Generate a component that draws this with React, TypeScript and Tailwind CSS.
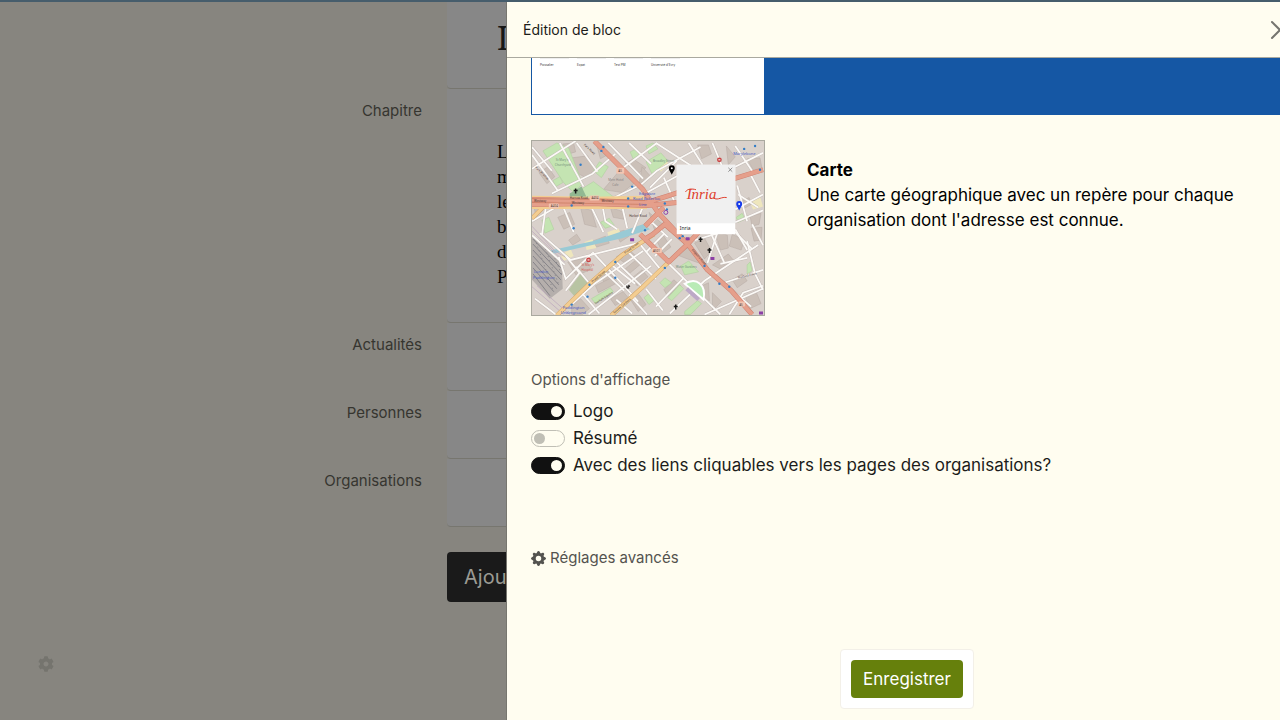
import { FaCog } from 'react-icons/fa'
import { BsGearFill } from 'react-icons/bs'
import { X } from 'lucide-react'

const blocks = [
  { label: 'Actualités' },
  { label: 'Personnes' },
  { label: 'Organisations' },
]

const options = [
  { id: 'logo', label: 'Logo', checked: true },
  { id: 'summary', label: 'Résumé', checked: false },
  { id: 'links', label: 'Avec des liens cliquables vers les pages des organisations?', checked: true },
]

const parks = [
  'M11 10 25 2 37 7 51 43 42 52 32 42Z',
  'M49 49 62 41 83 57 62 65Z',
  'M62 30 68 21 77 26 70 37Z',
  'M21 40 28 36 31 42 24 46Z',
  'M99 11 105 8 108 14 102 18Z',
  'M115 21 130 12 137 20 121 33Z',
  'M115 5 122 2 127 8 118 13Z',
  'M69 82 78 78 83 85 74 88Z',
  'M10 80 17 77 22 89 13 93Z',
  'M206 77 212 73 215 79 208 82Z',
  'M150 126 158 121 168 132 154 135Z',
  'M137 158 149 145 153 149 141 161Z',
  'M154 172 167 161 171 164 160 175 154 175Z',
  'M113 158 119 153 123 161 118 165Z',
  'M129 143 134 138 141 143 134 148Z',
  'M60 159 79 148 82 152 64 164Z',
  'M217 125 220 122 222 131 217 134Z',
]

const streets = [
  'M0 28 44 0', 'M0 14 26 50', 'M0 6 20 30', 'M28 2 52 46', 'M45 2 66 31', 'M20 53 61 33 84 13',
  'M83 57 110 44 126 30 170 6', 'M92 27 126 2', 'M77 2 112 38', 'M98 2 120 23', 'M125 2 170 31',
  'M158 2 172 24', 'M182 2 194 31', 'M205 5 224 33', 'M233 12 205 26', 'M30 63 42 92', 'M60 67 72 92',
  'M0 81 27 65', 'M14 66 10 95', 'M71 65 74 81 86 89', 'M91 66 96 88', 'M112 66 101 93',
  'M0 95 33 125', 'M8 93 39 120 119 100', 'M27 117 34 139 61 113', 'M44 127 59 145', 'M61 112 90 143 107 162',
  'M84 121 113 149', 'M96 111 125 139', 'M108 103 130 130', 'M50 153 68 174', 'M72 131 93 151',
  'M79 124 104 144', 'M41 164 63 144 112 111', 'M57 175 120 126', 'M85 160 101 174', 'M98 155 116 175',
  'M115 149 132 171', 'M137 123 190 175', 'M125 167 153 138', 'M139 174 174 141 228 105', 'M184 135 221 167',
  'M174 175 233 149', 'M191 144 233 130', 'M199 175 213 153 233 146', 'M217 101 225 134 233 150',
  'M164 100 202 89 222 109', 'M179 90 194 123', 'M205 89 217 110', 'M190 83 177 123', 'M222 84 233 105',
  'M207 45 217 81', 'M205 69 233 54', 'M208 54 228 67', 'M205 82 233 70', 'M121 82 137 97', 'M115 112 133 94',
  'M124 116 141 99', 'M119 84 135 68', 'M114 53 147 35', 'M133 37 144 62', 'M190 124 217 118', 'M220 33 230 52',
  'M34 116 48 133 34 151', 'M3 159 24 175', 'M119 47 146 20',
]

const buildings = [
  'M7 32 16 26 23 36 15 43Z', 'M31 3 42 2 44 11 37 13Z', 'M40 17 56 15 64 29 54 37 47 33Z',
  'M65 3 76 14 69 18Z', 'M72 49 89 29 104 42 91 52Z', 'M94 23 108 32 115 27 102 18Z', 'M2 66 11 70 4 77Z',
  'M26 77 38 72 43 84 32 89Z', 'M49 67 60 70 65 87 53 84Z', 'M79 67 91 71 93 79 82 77Z',
  'M111 26 120 36 108 43Z', 'M167 4 178 4 181 13 171 18Z', 'M196 5 205 16 198 24Z', 'M217 18 230 17 232 28 223 29Z',
  'M211 61 219 57 221 64 214 68Z', 'M220 76 231 73 229 84 222 86Z', 'M37 100 45 94 49 100 41 105Z',
  'M61 101 74 96 78 103 65 107Z', 'M84 92 93 90 98 96 89 102Z', 'M36 122 53 118 60 129 45 136Z',
  'M68 135 77 127 84 135 73 143Z', 'M85 117 95 124 105 116 97 109Z', 'M64 146 82 137 86 143 67 153Z',
  'M101 138 111 130 117 137 106 146Z', 'M94 129 106 119 111 123 98 134Z', 'M79 159 92 152 97 158 84 166Z',
  'M40 166 49 159 58 169 51 175 40 175Z', 'M100 161 108 155 115 165 107 172Z', 'M144 114 157 108 171 124 157 119Z',
  'M161 151 178 143 179 161 169 158Z', 'M202 140 212 134 217 141 207 148Z', 'M215 157 226 152 231 164 220 169Z',
  'M182 125 198 114 203 120 190 129Z', 'M202 94 214 100 211 110 199 106Z', 'M164 103 174 98 181 111 174 119Z',
  'M184 91 197 95 198 108 190 110Z', 'M221 88 232 87 231 100 224 101Z', 'M118 72 132 84 124 91Z',
  'M126 101 133 96 140 107 132 113Z', 'M182 153 191 162 182 171Z', 'M133 150 143 140 150 146 137 157Z',
]

const roads = [
  'M0 59 55 60 116 62 138 55 147 52M204 38 233 29',
  'M0 64 60 63 116 65 146 62',
  'M63 0 90 27 112 49 127 72 157 104 177 130 201 151 222 175',
  'M114 86 133 67M112 100 122 94 134 84 157 104 138 122 109 94',
  'M157 104 168 92',
]

const stations: [number, number][] = [
  [72, 6], [70, 10], [49, 24], [101, 46], [97, 58], [97, 66], [40, 65], [42, 88], [114, 90], [84, 122],
  [84, 138], [56, 157], [58, 145], [40, 165], [134, 128], [174, 126], [189, 144], [199, 147], [214, 8],
  [225, 5], [230, 29], [136, 69], [134, 63], [149, 98], [152, 96],
]

function MapPreview() {
  return (
    <svg viewBox="0 0 234 176" className="block h-auto w-full" role="img" aria-label="Carte">
      <rect width="234" height="176" fill="#d9d1cb" />
      <g fill="#cbc0b8" stroke="#b5aaa4" strokeWidth=".5">
        {buildings.map((d) => <path key={d} d={d} />)}
      </g>
      <path d="M29 115 39 109 42 116 32 121ZM53 102 61 99 65 108 55 110ZM76 92 87 88 90 94 78 99ZM219 60 230 56 233 66 223 69ZM124 21 134 16 138 24 130 31Z" fill="#eee6bd" />
      <g fill="#c4e4b2" stroke="#afd09f" strokeWidth=".6">
        {parks.map((d) => <path key={d} d={d} />)}
      </g>
      <path d="M38 53 50 46 57 61 38 61Z" fill="#91b891" />
      <path d="M37 150 49 134 60 145 45 159Z" fill="#b8c4a3" />
      <path d="M0 112 16 111 61 101 112 84 119 89 91 98 25 113 0 117Z" fill="#99cad5" />
      <path d="M0 96 30 122 31 149 18 159 0 140Z" fill="#b5afac" />
      <g stroke="#858388">
        <path d="M1 99 31 130M1 104 30 135M1 110 29 140M1 116 27 145M1 122 25 149M1 128 22 152M1 134 18 156M7 100 31 123" />
        <path d="M3 99 21 150M12 105 27 145M20 111 30 135" strokeDasharray="1 3" />
      </g>
      <path d="M0 86 23 111 37 119M0 91 33 122M0 147 32 175M5 146 38 175" fill="none" stroke="#b9a5bc" strokeWidth=".7" />
      <g fill="none" stroke="#c1b8b4" strokeWidth="2.6">
        {streets.map((d) => <path key={d} d={d} />)}
      </g>
      <g fill="none" stroke="#fcfaf7" strokeWidth="1.8">
        {streets.map((d) => <path key={d} d={d} />)}
      </g>
      <path d="M154 144C166 137 176 145 173 160Z" fill="#b9ebb6" stroke="#fff" strokeWidth="2" />
      <path d="M156 149 168 160" stroke="#bda9c7" strokeWidth="4" />
      <path d="M25 176 59 143 91 115 123 94M80 176 112 147 139 121M0 78 12 66" fill="none" stroke="#d4a568" strokeWidth="4.4" />
      <path d="M25 176 59 143 91 115 123 94M80 176 112 147 139 121M0 78 12 66M0 57 60 58 114 57M0 67 60 67 116 67" fill="none" stroke="#f3cd91" strokeWidth="3.4" />
      <g fill="none" stroke="#cf8170" strokeWidth="5" strokeLinejoin="round">
        {roads.map((d) => <path key={d} d={d} />)}
      </g>
      <g fill="none" stroke="#e59f8b" strokeWidth="4" strokeLinejoin="round">
        {roads.map((d) => <path key={d} d={d} />)}
      </g>
      <path d="M0 62 115 64M0 58 114 60" stroke="#c8795e" strokeWidth=".7" />
      <g fill="#f2c5b1">
        <rect x="85" y="27" width="8" height="6" rx="1" />
        <rect x="58" y="55" width="10" height="5" rx="1" />
        <rect x="17" y="63" width="10" height="5" rx="1" />
        <rect x="121" y="108" width="10" height="5" rx="1" />
        <rect x="208" y="162" width="7" height="5" rx="1" />
      </g>
      <g fontFamily="Noto Sans, sans-serif" fontSize="3" fill="#4d3936">
        <text x="2" y="62">Westway</text>
        <text x="38" y="58">Harrow Road</text>
        <text x="40" y="64">Westway</text>
        <text x="70" y="62">Westway</text>
        <text x="60" y="59">A404</text>
        <text x="19" y="67">A404</text>
        <text x="87" y="31">A5</text>
        <text x="122" y="112">A501</text>
        <text x="209" y="166">A5</text>
        <text x="61" y="143" transform="rotate(-40 61 143)">Praed Street</text>
        <text x="94" y="114" transform="rotate(-37 94 114)">Praed Street</text>
        <text x="83" y="174" transform="rotate(-40 83 174)">Sussex Gardens</text>
        <text x="161" y="110" transform="rotate(49 161 110)">Edgware Road</text>
        <text x="98" y="77">Harbet Road</text>
        <text x="64" y="165" transform="rotate(-33 64 165)">Norfolk Square</text>
        <text x="52" y="4" transform="rotate(43 52 4)">Park Road</text>
        <text x="3" y="27" transform="rotate(44 3 27)">Park Pl Villas</text>
        <text x="208" y="139" transform="rotate(-14 208 139)">Nutford Place</text>
      </g>
      <g fontFamily="Noto Sans, sans-serif" fontSize="3" fill="#75907b">
        <text x="24" y="20">St Mary's</text>
        <text x="23" y="25">Churchyard</text>
        <text x="77" y="40" fill="#868181">Merc Hotel</text>
        <text x="81" y="45" fill="#868181">Cafe</text>
        <text x="145" y="128">Water Gardens</text>
        <text x="122" y="21">Broadley Street</text>
      </g>
      <g fontFamily="Noto Sans, sans-serif" fontSize="4" fill="#4457c4">
        <text x="108" y="54">Edgware</text>
        <text x="102" y="60">Road Bakerloo</text>
        <text x="108" y="66">Line</text>
        <text x="31" y="169">Paddington</text>
        <text x="29" y="175">Underground</text>
        <text x="2" y="133">London</text>
        <text x="1" y="139">Paddington</text>
        <text x="203" y="14">Marylebone</text>
      </g>
      <g fontFamily="Noto Sans, sans-serif" fontSize="3" fill="#d45b55">
        <text x="50" y="126">St Mary's</text>
        <text x="50" y="131">Hospital</text>
      </g>
      {stations.map(([x, y]) => <circle key={`${x}-${y}`} cx={x} cy={y} r="1.2" fill="#337dc6" />)}
      <path d="M99 98h4v3h-4ZM155 97h4v3h-4ZM180 117h4v3h-4ZM229 172h4v3h-4Z" fill="#8c3fa5" />
      <circle cx="135" cy="72" r="2" fill="none" stroke="#8c3fa5" />
      <circle cx="57" cy="120" r="2.4" fill="#c94242" />
      <circle cx="189" cy="19" r="2.4" fill="#c94242" />
      <path d="M56 120h2M188 19h2" stroke="#fff" />
      <path d="M44 48v5M42 50h4M170 97v5M168 99h4M179 108v5M177 110h4M145 165v5M143 167h4" stroke="#171717" strokeWidth="1.5" />
      <circle cx="97" cy="147" r="2" fill="#302d2b" />
      <path d="M96 146h1M98 148h1" stroke="#fff" />
      <path d="M141 34C139 30 138 29 138 27.500A3 3 0 0 1 144 27.500C144 29 143 30 141 34Z" fill="#000" />
      <circle cx="141" cy="27.500" r="1" fill="#fff" />
      <path d="M209 70C207 66 206 65 206 63.500A3 3 0 0 1 212 63.500C212 65 211 66 209 70Z" fill="#173bea" />
      <circle cx="209" cy="63.500" r="1" fill="#fff" />
      <rect x="146" y="24" width="59" height="70" fill="#fff" />
      <rect x="146" y="24" width="59" height="59" fill="#f0f0f0" />
      <path d="m198 27 4 4m0-4-4 4" stroke="#555" strokeWidth=".6" />
      <text x="156" y="59" fontFamily="Liberation Serif, serif" fontStyle="italic" fontSize="15" fill="#df3d2b">Inria</text>
      <path d="M155 51C157 48 161 48 165 49M184 58C188 60 191 56 196 57" fill="none" stroke="#df3d2b" strokeLinecap="round" />
      <text x="149" y="90" fontFamily="Noto Sans, sans-serif" fontSize="5" fill="#222">Inria</text>
    </svg>
  )
}

function PageBehind() {
  return (
    <main className="grid grid-cols-[422px_1fr] gap-x-[25px] text-[15px] text-[#363530]">
      <div />
      <section className="h-[87px] rounded-b border-b border-[#77766f] bg-[#878787] pt-4 pl-[50px]">
        <h2 className="font-['Noto_Serif','Liberation_Serif',serif] text-[32px] leading-10 text-[#171717]">L</h2>
      </section>
      <h3 className="pt-3 text-right leading-5">Chapitre</h3>
      <section className="h-[234px] rounded-b border-b border-[#77766f] bg-[#878787] pt-[50px] pl-[50px] font-['Liberation_Serif',serif] text-[19px] leading-[25px] text-black">
        <p>L’institut</p>
        <p>mène</p>
        <p>les</p>
        <p>besoins</p>
        <p>de</p>
        <p>Paris</p>
      </section>
      {blocks.map((block) => (
        <div key={block.label} className="contents">
          <h3 className="pt-3 text-right leading-5">{block.label}</h3>
          <section className="h-[68px] rounded-b border-b border-[#77766f] bg-[#878787]" />
        </div>
      ))}
      <div />
      <button className="mt-[25px] h-[50px] w-[220px] rounded bg-[#1a1a1a] px-[17px] text-left text-xl text-[#9b9a93]">Ajouter un bloc</button>
    </main>
  )
}

function Switch({ id, label, checked }: { id: string; label: string; checked: boolean }) {
  return (
    <div className="flex h-[27px] items-center gap-2">
      <input
        id={id}
        type="checkbox"
        role="switch"
        defaultChecked={checked}
        className="flex h-[17px] w-[34px] shrink-0 appearance-none items-center rounded-full border border-[#c0bfb5] px-[2px] before:size-[11px] before:rounded-full before:bg-[#c0bfb5] checked:justify-end checked:border-[#111] checked:bg-[#111] checked:before:bg-[#fffdf0]"
      />
      <label htmlFor={id} className="text-[17px] text-[#1c1c1a]">{label}</label>
    </div>
  )
}

export default function App() {
  return (
    <div className="relative h-screen overflow-hidden border-t-2 border-[#465d6c] bg-[#87857f] font-['Inter',sans-serif]">
      <PageBehind />
      <button aria-label="Réglages" className="absolute bottom-12 left-[38px] text-[#75746e]">
        <FaCog className="size-4" />
      </button>

      <div className="absolute inset-0 flex pl-[506px]">
        <aside className="flex min-w-0 flex-1 flex-col border-l border-[#77766f] bg-[#fffdf0]">
          <header className="flex h-14 shrink-0 items-center justify-between border-b border-[#aaa99f] pl-4">
            <h1 className="text-sm text-[#1c1c1a]">Édition de bloc</h1>
            <button aria-label="Fermer" className="-mr-4 text-[#76756f]">
              <X className="size-8" strokeWidth={1.5} />
            </button>
          </header>

          <div className="min-h-0 flex-1 overflow-hidden pl-6">
            <div className="flex h-[57px] border border-t-0 border-[#1557a4] bg-[#1557a4]">
              <div className="flex w-[232px] items-start gap-2 bg-white px-2 text-[3px] leading-3 text-[#333]">
                <span className="w-[29px] border-t border-[#eee]">Poissalier</span>
                <span className="w-[29px] border-t border-[#eee]">Expat</span>
                <span className="w-[29px] border-t border-[#eee]">Test PM</span>
                <span className="w-[29px] border-t border-[#eee] whitespace-nowrap">Université d’Evry</span>
              </div>
            </div>

            <div className="mt-[25px] flex gap-[42px]">
              <div className="w-[234px] shrink-0 border border-[#aaa99f]">
                <MapPreview />
              </div>
              <div className="pt-[18px] pr-6 text-[17px] leading-[25px] text-black">
                <h2 className="font-bold">Carte</h2>
                <p>Une carte géographique avec un repère pour chaque organisation dont l'adresse est connue.</p>
              </div>
            </div>

            <fieldset className="mt-[54px]">
              <legend className="mb-2 text-[15px] leading-5 text-[#54534f]">Options d'affichage</legend>
              {options.map((option) => (
                <Switch key={option.id} {...option} />
              ))}
            </fieldset>

            <button className="mt-[69px] flex items-center gap-1 text-[15px] leading-5 text-[#54534f]">
              <BsGearFill className="size-[15px]" />
              Réglages avancés
            </button>
          </div>

          <footer className="flex shrink-0 justify-center pb-[11px] pl-[27px]">
            <div className="rounded border border-[#f3f0e8] bg-white p-[10px]">
              <button className="h-[38px] rounded bg-[#66800c] px-3 pt-px text-[17px] text-white">Enregistrer</button>
            </div>
          </footer>
        </aside>
      </div>
    </div>
  )
}
